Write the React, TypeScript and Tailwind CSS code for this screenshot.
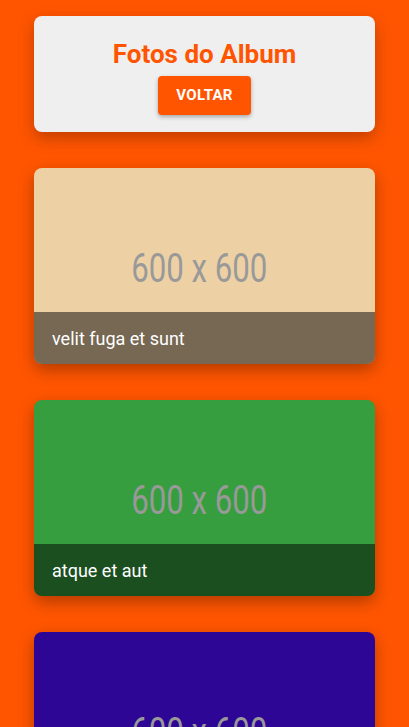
import React from "react";

const photos = [
  { title: "velit fuga et sunt", bg: "#edd1a5" },
  { title: "atque et aut", bg: "#379e40" },
  { title: "molestiae nobis dolorem", bg: "#2e0696" },
  { title: "et aut perferendis", bg: "#8a3c5e" },
];

export default function App() {
  return (
    <div
      className="min-h-screen bg-[#ff5500] px-[34px] pt-4 pb-9 flex flex-col gap-9"
      style={{ fontFamily: "Roboto, 'Liberation Sans', sans-serif" }}
    >
      <div className="bg-[#efefef] rounded-lg shadow-[0_6px_16px_rgba(0,0,0,0.25)] h-[116px] flex flex-col items-center pt-[22px] gap-[6px]">
        <h1 className="text-[26px] leading-[32px] font-bold text-[#ff5500]">Fotos do Album</h1>
        <button className="bg-[#ff5500] text-white font-bold text-[15px] tracking-[0.3px] h-[39px] w-[93px] rounded shadow-[0_2px_4px_rgba(0,0,0,0.3)]">
          VOLTAR
        </button>
      </div>
      {photos.map((p) => (
        <div
          key={p.title}
          className="relative h-[196px] rounded-lg overflow-hidden shadow-[0_6px_16px_rgba(0,0,0,0.3)] flex items-center justify-center"
          style={{ backgroundColor: p.bg }}
        >
          <span className="text-[40px] text-[#999999] scale-x-[0.78] translate-x-[-5px] translate-y-[3px] whitespace-nowrap">600 x 600</span>
          <div className="absolute left-0 right-0 bottom-0 h-[52px] bg-black/50 flex items-center px-[18px]">
            <span className="text-white text-[18px]">{p.title}</span>
          </div>
        </div>
      ))}
    </div>
  );
}
